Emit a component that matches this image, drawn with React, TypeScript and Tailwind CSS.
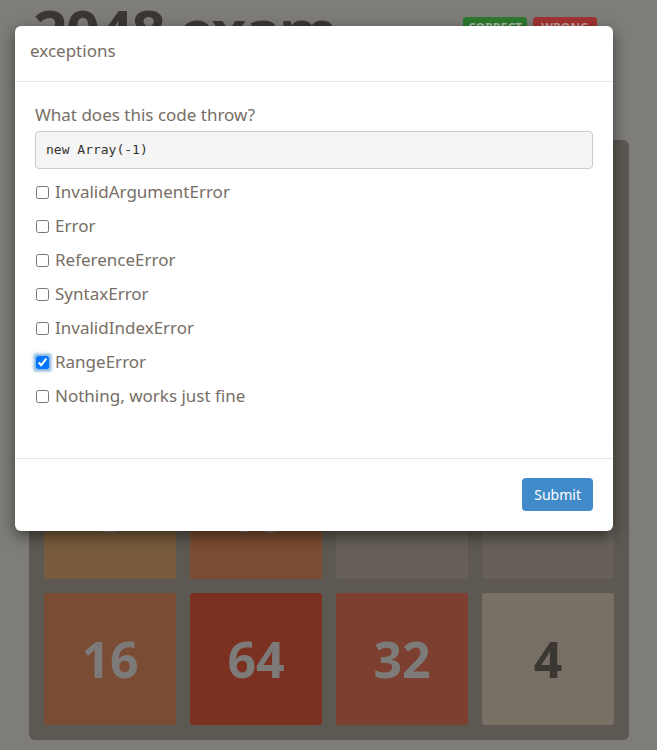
import { useState } from 'react';

const options = [
  'InvalidArgumentError',
  'Error',
  'ReferenceError',
  'SyntaxError',
  'InvalidIndexError',
  'RangeError',
  'Nothing, works just fine',
];

// tile colours as they look under the dimmed backdrop
const tileStyles: Record<number, string> = {
  0: 'bg-[#666059]',
  4: 'bg-[#787064] text-[#3b3732]',
  8: 'bg-[#795b3d] text-[#7c7b79]',
  16: 'bg-[#7a4c33] text-[#7c7b79]',
  32: 'bg-[#7c3f30] text-[#7c7b79]',
  64: 'bg-[#7c3020] text-[#7c7b79]',
};

const grid = [
  [0, 0, 0, 0],
  [0, 0, 0, 0],
  [8, 16, 0, 0],
  [16, 64, 32, 4],
];

function Board() {
  return (
    <div className="ml-[29px] mt-[15px] w-[600px] rounded-md bg-[#5e5852] p-[15px]">
      <div className="grid grid-cols-4 gap-[14px]">
        {grid.flat().map((v, i) => (
          <div
            key={i}
            className={`flex h-[132px] items-center justify-center rounded-[3px] text-[50px] font-bold ${tileStyles[v]}`}
          >
            {v > 0 ? v : ''}
          </div>
        ))}
      </div>
    </div>
  );
}

export default function App() {
  const [checked, setChecked] = useState<string>('RangeError');

  return (
    <div
      className="relative h-[750px] w-[657px] overflow-hidden bg-[#7f7d79]"
      style={{ fontFamily: '"Noto Sans", "Open Sans", sans-serif' }}
    >
      {/* Page behind the dialog */}
      <div className="flex h-[125px] items-start justify-between pl-[33px] pr-[60px]">
        <h1 className="mt-[0px] text-[60px] font-bold leading-none tracking-tight text-[#3b3732]">2048 exam</h1>
        <div className="mt-[17px] flex gap-[6px]">
          <span className="w-[64px] rounded-[3px] bg-[#2e7a30] py-[2px] text-center text-[12px] font-bold text-[#a9b8a9]">CORRECT</span>
          <span className="w-[64px] rounded-[3px] bg-[#a33434] py-[2px] text-center text-[12px] font-bold text-[#c8a0a0]">WRONG</span>
        </div>
      </div>
      <Board />

      {/* Modal */}
      <div className="absolute left-[15px] top-[26px] w-[598px] rounded-md bg-white shadow-[0_5px_15px_rgba(0,0,0,0.5)]">
        <div className="border-b border-[#e5e5e5] px-[15px] pb-[17px] pt-[12px]">
          <h4 className="text-[17px] leading-[26px] text-[#776e65]">exceptions</h4>
        </div>
        <div className="px-5 pb-[45px] pt-[20px]">
          <p className="text-[17px] leading-[26px] text-[#776e65]">What does this code throw?</p>
          <pre className="mt-[3px] rounded border border-[#ccc] bg-[#f5f5f5] px-[10px] py-[9px] font-['DejaVu_Sans_Mono',monospace] text-[13px] leading-[18px] text-[#333]">
            new Array(-1)
          </pre>
          <div className="mt-[6px] flex flex-col">
            {options.map((o) => (
              <label key={o} className="flex h-[34px] items-center gap-[6px] text-[17px] text-[#776e65]">
                <input
                  type="checkbox"
                  className={
                    checked === o
                      ? 'ml-[1px] h-[13px] w-[13px] rounded-sm shadow-[0_0_3px_2px_rgba(66,139,202,0.75)]'
                      : 'ml-[1px] h-[13px] w-[13px]'
                  }
                  checked={checked === o}
                  onChange={() => setChecked(o)}
                />
                {o}
              </label>
            ))}
          </div>
        </div>
        <div className="flex justify-end border-t border-[#e5e5e5] px-5 pb-5 pt-[19px]">
          <button className="h-[33px] rounded bg-[#428bca] px-[12px] text-[14px] text-white">Submit</button>
        </div>
      </div>
    </div>
  );
}
